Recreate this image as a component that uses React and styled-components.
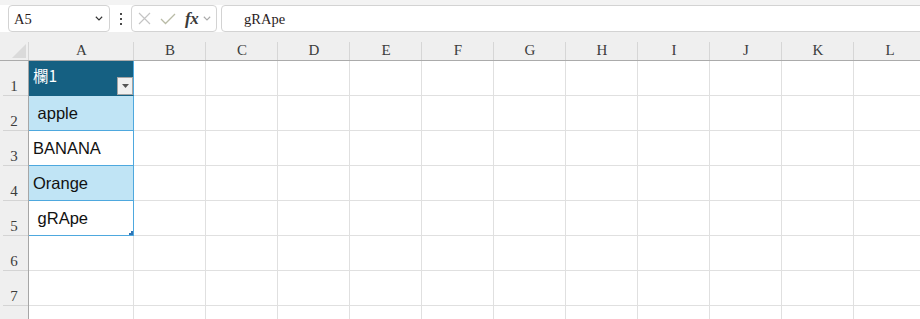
import React from "react"
import styled, { createGlobalStyle } from "styled-components"

const GlobalStyle = createGlobalStyle`
  html, body {
    margin: 0;
    padding: 0;
    background: #ffffff;
    overflow: hidden;
  }
`

const COLS = ["B", "C", "D", "E", "F", "G", "H", "I", "J", "K", "L"]

const ROWS = [
  { n: 1, text: "欄1", kind: "head" },
  { n: 2, text: " apple", kind: "band" },
  { n: 3, text: "BANANA", kind: "plain" },
  { n: 4, text: "Orange", kind: "band" },
  { n: 5, text: " gRApe", kind: "plain", handle: true },
  { n: 6 },
  { n: 7 },
  { n: 8, hidden: true },
]

const Window = styled.div`
  width: 920px;
  height: 319px;
  overflow: hidden;
  background: #fff;
`

const TopStrip = styled.div`
  height: 5px;
  background: #f3f3f3;
`

const FormulaBar = styled.div`
  height: 27px;
  display: flex;
  align-items: stretch;
  padding-left: 8px;
  background: #fff;
`

const Box = styled.div`
  box-sizing: border-box;
  display: flex;
  align-items: center;
  border: 1px solid #d3d3d3;
  border-radius: 4px;
  background: #fff;
`

const NameBox = styled(Box)`
  width: 102px;
  padding: 0 6px 0 5px;
  justify-content: space-between;
`

const RefText = styled.span`
  font-family: "Liberation Serif", "DejaVu Serif", serif;
  font-size: 14.5px;
  color: #2a1c1c;
  white-space: pre;
  padding-top: 2px;
`

const Dots = styled.div`
  width: 21px;
  display: flex;
  flex-direction: column;
  align-items: center;
  justify-content: center;
  gap: 3px;

  span {
    width: 2px;
    height: 2px;
    background: #4a4a4a;
  }
`

const FxBox = styled(Box)`
  width: 86px;
  padding-left: 6px;
`

const Fx = styled.span`
  font-family: "Liberation Serif", serif;
  font-style: italic;
  font-weight: bold;
  font-size: 17px;
  color: #3a3a3a;
  margin: 0 4px 0 9px;
  letter-spacing: -0.3px;
`

const FormulaInput = styled(Box)`
  flex: 1;
  margin-left: 4px;
  margin-right: -12px;
  padding-left: 22px;
`

const Sheet = styled.div`
  display: grid;
  grid-template-columns: 29px 105px repeat(11, 72px);
  grid-template-rows: 29px repeat(8, 35px);
`

const Corner = styled.div`
  box-sizing: border-box;
  background: linear-gradient(#d6d6d6, #d6d6d6) right bottom / 1px 18px no-repeat, #efefef;
  border-bottom: 1px solid #ababab;
  display: flex;
  align-items: flex-end;
  justify-content: flex-end;
  padding: 0 3px 2px 0;
`

const ColHead = styled.div`
  box-sizing: border-box;
  background: linear-gradient(#d6d6d6, #d6d6d6) right bottom / 1px 18px no-repeat, #efefef;
  border-bottom: 1px solid #ababab;
  display: flex;
  align-items: flex-end;
  justify-content: center;
  padding-bottom: 2px;
  font-family: "Liberation Serif", serif;
  font-size: 15px;
  line-height: 15px;
  color: #3c3c3c;
`

const RowHead = styled.div`
  box-sizing: border-box;
  background: linear-gradient(#d4d4d4, #d4d4d4) right bottom / 25px 1px no-repeat, #efefef;
  border-right: 1px solid #a6a6a6;
  display: flex;
  align-items: flex-end;
  justify-content: center;
  padding-bottom: 2px;
  font-family: "Liberation Serif", serif;
  font-size: 15px;
  line-height: 15px;
  color: #3c3c3c;
`

const cellBg = { head: "#156082", band: "#c0e4f5", plain: "#ffffff" }

const TableCell = styled.div`
  position: relative;
  box-sizing: border-box;
  display: flex;
  align-items: flex-end;
  padding-left: 4px;
  background: ${(p) => cellBg[p.$kind]};
  border-right: 1px solid #4ea8de;
  border-bottom: 1px solid ${(p) => (p.$kind === "head" ? "#156082" : "#4ea8de")};
  color: ${(p) => (p.$kind === "head" ? "#ffffff" : "#111111")};
  font-family: ${(p) =>
    p.$kind === "head"
      ? `"Noto Sans CJK TC", "Noto Sans", sans-serif`
      : `"Liberation Sans", Arial, sans-serif`};
  font-size: ${(p) => (p.$kind === "head" ? "15.5px" : "16.5px")};
`

const CellText = styled.span`
  line-height: 20px;
  padding-bottom: ${(p) => (p.$head ? "10px" : "7px")};
  white-space: pre;
`

const FilterButton = styled.span`
  box-sizing: border-box;
  margin-left: auto;
  align-self: flex-end;
  width: 16px;
  height: 18px;
  background: #f0f0f0;
  border: 1px solid #a3a3a3;
  display: flex;
  align-items: center;
  justify-content: center;
`

const Handle = styled.svg`
  position: absolute;
  right: 0;
  bottom: 0;
`

const Cell = styled.div`
  box-sizing: border-box;
  border-right: 1px solid #e0e0e0;
  border-bottom: 1px solid #e0e0e0;
`

const Chevron = ({ color, size = 8 }) => (
  <svg width={size} height={size * 0.6} viewBox="0 0 8 5" fill="none">
    <path d="M0.7 0.8 L4 4 L7.3 0.8" stroke={color} strokeWidth="1.2" />
  </svg>
)

const App = () => (
  <Window>
    <GlobalStyle />
    <TopStrip />
    <FormulaBar>
      <NameBox>
        <RefText>A5</RefText>
        <Chevron color="#333" />
      </NameBox>
      <Dots>
        <span />
        <span />
        <span />
      </Dots>
      <FxBox>
        <svg width="13" height="13" viewBox="0 0 13 13" fill="none">
          <path d="M1 1 L12 12 M12 1 L1 12" stroke="#c4c4c4" strokeWidth="1.2" />
        </svg>
        <svg width="16" height="12" viewBox="0 0 16 12" fill="none" style={{ marginLeft: 9 }}>
          <path d="M1 6 L5.5 10.5 L15 1" stroke="#b9bba6" strokeWidth="1.3" />
        </svg>
        <Fx>fx</Fx>
        <Chevron color="#ababab" />
      </FxBox>
      <FormulaInput>
        <RefText>gRApe</RefText>
      </FormulaInput>
    </FormulaBar>

    <Sheet>
      <Corner>
        <svg width="14" height="14" viewBox="0 0 14 14">
          <polygon points="14,0 14,14 0,14" fill="#dadada" />
        </svg>
      </Corner>
      <ColHead>A</ColHead>
      {COLS.map((c) => (
        <ColHead key={c}>{c}</ColHead>
      ))}

      {ROWS.map((row) => (
        <React.Fragment key={row.n}>
          <RowHead>{row.hidden ? "" : row.n}</RowHead>
          {row.kind ? (
            <TableCell $kind={row.kind}>
              <CellText $head={row.kind === "head"}>{row.text}</CellText>
              {row.kind === "head" && (
                <FilterButton>
                  <svg width="7" height="4" viewBox="0 0 7 4">
                    <polygon points="0,0 7,0 3.5,4" fill="#555" />
                  </svg>
                </FilterButton>
              )}
              {row.handle && (
                <Handle width="4" height="4" viewBox="0 0 4 4">
                  <path d="M2 0 H4 V4 H0 V2 H2 Z" fill="#2e75b6" />
                </Handle>
              )}
            </TableCell>
          ) : (
            <Cell />
          )}
          {COLS.map((c) => (
            <Cell key={c} />
          ))}
        </React.Fragment>
      ))}
    </Sheet>
  </Window>
)

export default App
